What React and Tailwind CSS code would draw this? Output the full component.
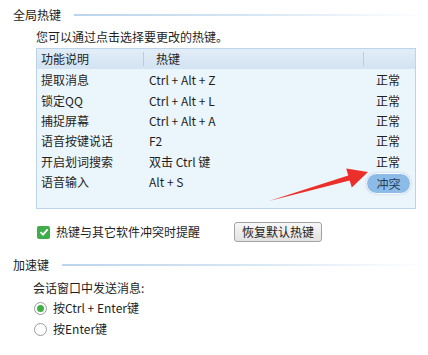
import React from "react";

const rows = [
  { name: "提取消息", key: "Ctrl + Alt + Z", status: "正常" },
  { name: "锁定QQ", key: "Ctrl + Alt + L", status: "正常" },
  { name: "捕捉屏幕", key: "Ctrl + Alt + A", status: "正常" },
  { name: "语音按键说话", key: "F2", status: "正常" },
  { name: "开启划词搜索", key: "双击 Ctrl 键", status: "正常" },
  { name: "语音输入", key: "Alt + S", status: "冲突" },
];

const SectionTitle = ({ children, lineGap }) => (
  <div className="flex items-center pl-[13px]">
    <span className="text-[12px] leading-[16px] text-[#222]">{children}</span>
    <div
      className={`h-[2px] flex-1 bg-gradient-to-r from-[#bcd5ec] via-[#d6e6f4] to-white ${lineGap}`}
    />
  </div>
);

const App = () => {
  return (
    <div
      className="relative w-[428px] h-[355px] overflow-hidden bg-white text-[#1e1e1e] pt-[7px]"
      style={{ fontFamily: '"Noto Sans CJK SC", "Noto Sans", sans-serif' }}
    >
      {/* 全局热键 */}
      <SectionTitle lineGap="ml-[13px]">全局热键</SectionTitle>

      <p className="ml-[36px] mt-[6px] text-[12px] leading-[16px]">
        您可以通过点击选择要更改的热键。
      </p>

      {/* Table */}
      <div className="ml-[36px] mt-[3px] w-[380px] border border-[#bcd3e8] bg-[#ebf5fc] text-[12px]">
        <div className="flex h-[20px] items-center bg-gradient-to-b from-[#e2edf8] to-[#d3e3f2]">
          <div className="flex h-full w-[106px] items-center pl-[4px]">功能说明</div>
          <div className="h-[14px] w-px bg-[#b7cde2]" />
          <div className="flex h-full w-[219px] items-center pl-[12px]">热键</div>
          <div className="h-[14px] w-px bg-[#b7cde2]" />
          <div className="flex-1" />
        </div>
        <div className="h-[139px] pt-[1px]">
          {rows.map((row) => (
            <div key={row.name} className="flex h-[20.4px] items-center">
              <div className="w-[106px] pl-[4px]">{row.name}</div>
              <div className="w-[220px] pl-[6px]">{row.key}</div>
              <div className="flex flex-1 items-center">
                {row.status === "冲突" ? (
                  <span className="ml-[3px] mt-[3px] flex h-[21px] w-[45px] items-center justify-center rounded-full border border-white bg-[#8dbbe7] text-[#233f5e] shadow-[0_0_2px_rgba(120,150,180,0.6)]">
                    {row.status}
                  </span>
                ) : (
                  <span className="ml-[13px]">{row.status}</span>
                )}
              </div>
            </div>
          ))}
        </div>
      </div>

      {/* Checkbox + restore button */}
      <div className="mt-[13px] flex h-[20px] items-center">
        <div className="ml-[37px] flex h-[13px] w-[13px] items-center justify-center rounded-[2px] bg-[#3fae49]">
          <svg width="10" height="10" viewBox="0 0 10 10">
            <path d="M1.5 5.2 L4 7.6 L8.6 2.4" fill="none" stroke="white" strokeWidth="1.8" />
          </svg>
        </div>
        <span className="ml-[6px] w-[172px] text-[12px] leading-[16px]">热键与其它软件冲突时提醒</span>
        <button className="ml-[6px] h-[20px] w-[88px] rounded-[3px] border border-[#a3a3a3] bg-gradient-to-b from-[#f7f7f7] to-[#e2e2e2] text-[12px] leading-[16px] text-[#222]">
          恢复默认热键
        </button>
      </div>

      {/* 加速键 */}
      <div className="mt-[15px]">
        <SectionTitle lineGap="ml-[13px]">加速键</SectionTitle>
      </div>

      <p className="ml-[33px] mt-[7px] text-[12px] leading-[16px]">会话窗口中发送消息:</p>

      <div className="ml-[34px] mt-[4px] flex flex-col gap-[5px] text-[12px] leading-[16px]">
        <label className="flex items-center">
          <span className="flex h-[13px] w-[13px] items-center justify-center rounded-full border border-[#9c9c9c] bg-white">
            <span className="h-[7px] w-[7px] rounded-full bg-[#3fb043]" />
          </span>
          <span className="ml-[6px]">按Ctrl + Enter键</span>
        </label>
        <label className="flex items-center">
          <span className="h-[13px] w-[13px] rounded-full border border-[#9c9c9c] bg-white" />
          <span className="ml-[6px]">按Enter键</span>
        </label>
      </div>

      {/* Red arrow annotation */}
      <svg className="absolute left-0 top-0" width="428" height="355">
        <polygon
          points="269,201 348.3,175.6 346.2,168.4 368,172 351.8,187.6 349.7,180.4"
          fill="#ec2f2a"
        />
      </svg>
    </div>
  );
};

export default App;
